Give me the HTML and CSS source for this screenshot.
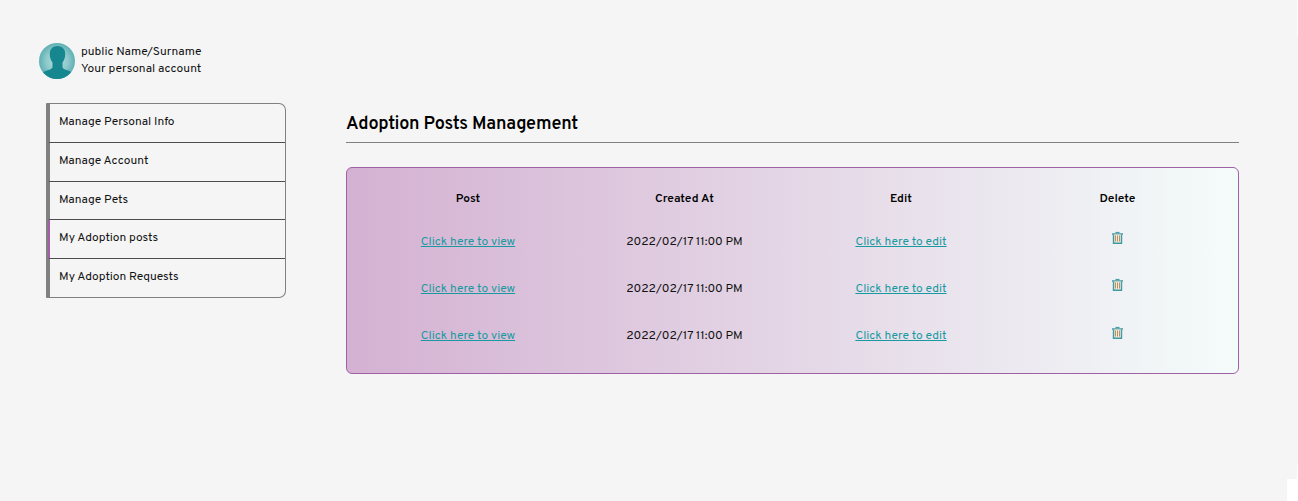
FILE: index.html
```html
<!DOCTYPE html>
<html lang="en">
<head>
<meta charset="utf-8">
<title>Adoption Posts Management</title>
<link rel="stylesheet" href="styles.css">
</head>
<body>
<svg class="symbols" aria-hidden="true">
  <symbol id="trash" viewBox="0 0 12 14">
    <path d="M3.500 1.500h4" fill="none" stroke="#459fa6" stroke-width="1.200"/>
    <path d="M0 3h11" fill="none" stroke="#4b979d" stroke-width="1.500"/>
    <path d="M1.500 3.500v8.700h8V3.500" fill="#f1e8e0" stroke="#3f9ba2" stroke-width="1.400"/>
    <path d="M3.500 4.500v6M5.500 4.500v6M7.500 4.500v6" fill="none" stroke="#b8935f" stroke-width="1"/>
  </symbol>
</svg>
<div class="page">
  <aside class="sidebar">
    <div class="profile">
      <svg class="avatar" viewBox="0 0 36 36">
        <defs>
          <radialGradient id="halo"><stop offset="0" stop-color="#b5dedf"/><stop offset=".6" stop-color="#8fcacc"/><stop offset="1" stop-color="#5fb0b4"/></radialGradient>
          <clipPath id="disc"><circle cx="18" cy="18" r="18"/></clipPath>
        </defs>
        <g clip-path="url(#disc)">
          <path fill="url(#halo)" d="M0 0h36v36H0z"/>
          <path fill="#16868f" d="M18.500 3c5 0 8 3.500 7.700 8.500-.1 3.500-1.200 6-2.700 8v4.500c0 3 7 3 10.500 6V36H3v-6c3.500-3 10.500-3 10.500-6v-4.500c-1.500-2-2.600-4.500-2.700-8C10.500 6.500 13.500 3 18.500 3z"/>
        </g>
      </svg>
      <div class="who">
        <div class="name">public Name/Surname</div>
        <div class="account">Your personal account</div>
      </div>
    </div>
    <nav class="menu">
      <a class="item">Manage Personal Info</a>
      <a class="item">Manage Account</a>
      <a class="item">Manage Pets</a>
      <a class="item active">My Adoption posts</a>
      <a class="item">My Adoption Requests</a>
    </nav>
  </aside>
  <main class="content">
    <h1 class="title">Adoption Posts Management</h1>
    <div class="posts">
      <div class="row head"><span>Post</span><span>Created At</span><span>Edit</span><span>Delete</span></div>
      <div class="row"><a class="link">Click here to view</a><span class="date">2022/02/17 11:00 PM</span><a class="link">Click here to edit</a><svg class="trash"><use href="#trash"/></svg></div>
      <div class="row"><a class="link">Click here to view</a><span class="date">2022/02/17 11:00 PM</span><a class="link">Click here to edit</a><svg class="trash"><use href="#trash"/></svg></div>
      <div class="row"><a class="link">Click here to view</a><span class="date">2022/02/17 11:00 PM</span><a class="link">Click here to edit</a><svg class="trash trash-last"><use href="#trash"/></svg></div>
    </div>
  </main>
</div>
<div class="edge"></div>
<div class="edge edge-low"></div>
<div class="corner"></div>
</body>
</html>
```
FILE: styles.css
```css
* { box-sizing: border-box; }
body { margin: 0; background: #f5f5f5; color: #111; font: 12px/17px Overpass, Inter, sans-serif; overflow: hidden; }
.symbols { display: none; }
.page { display: flex; height: 501px; }
.sidebar { width: 286px; padding-top: 42px; }
.profile { display: flex; gap: 6px; padding-left: 39px; height: 61px; }
.avatar { width: 36px; height: 36px; margin-top: 1px; }
.who { padding-top: 2px; }
.menu { margin-left: 46px; width: 240px; height: 195px; display: flex; flex-direction: column; border: 1px solid #808080; border-left-width: 2px; border-radius: 1px 7px 7px 1px; }
.item { flex: 1; padding: 10px 0 0 9px; border-left: 2px solid #808080; border-bottom: 1px solid #504d50; }
.item:last-child { border-bottom: 0; }
.active { border-left-color: #a55fa9; }
.content { margin-left: 60px; width: 893px; padding-top: 103px; }
.title { margin: 0 0 24px; height: 40px; padding-top: 2px; border-bottom: 1px solid #808080; font-size: 18px; line-height: 40px; font-weight: 600; letter-spacing: -.2px; color: #000; }
.posts { height: 207px; border: 1px solid #a060a4; border-radius: 6px; background: linear-gradient(90deg, #d4b1d2, #f4fcfa); padding-top: 11px; }
.row { display: grid; grid-template-columns: 242px 191px 242px 191px; height: 47px; align-items: center; justify-items: center; }
.head { height: 40px; font-weight: 600; color: #000; }
.link { color: #189aa0; text-decoration: underline; }
.trash { width: 12px; height: 14px; margin-bottom: 9px; }
.trash-last { margin-bottom: 7px; }
.edge { position: absolute; top: 0; right: 0; width: 1px; height: 36px; background: #fff; }
.edge-low { top: 464px; height: 15px; }
.corner { position: absolute; right: 0; bottom: 0; width: 11px; height: 22px; background: #fff; }
```
